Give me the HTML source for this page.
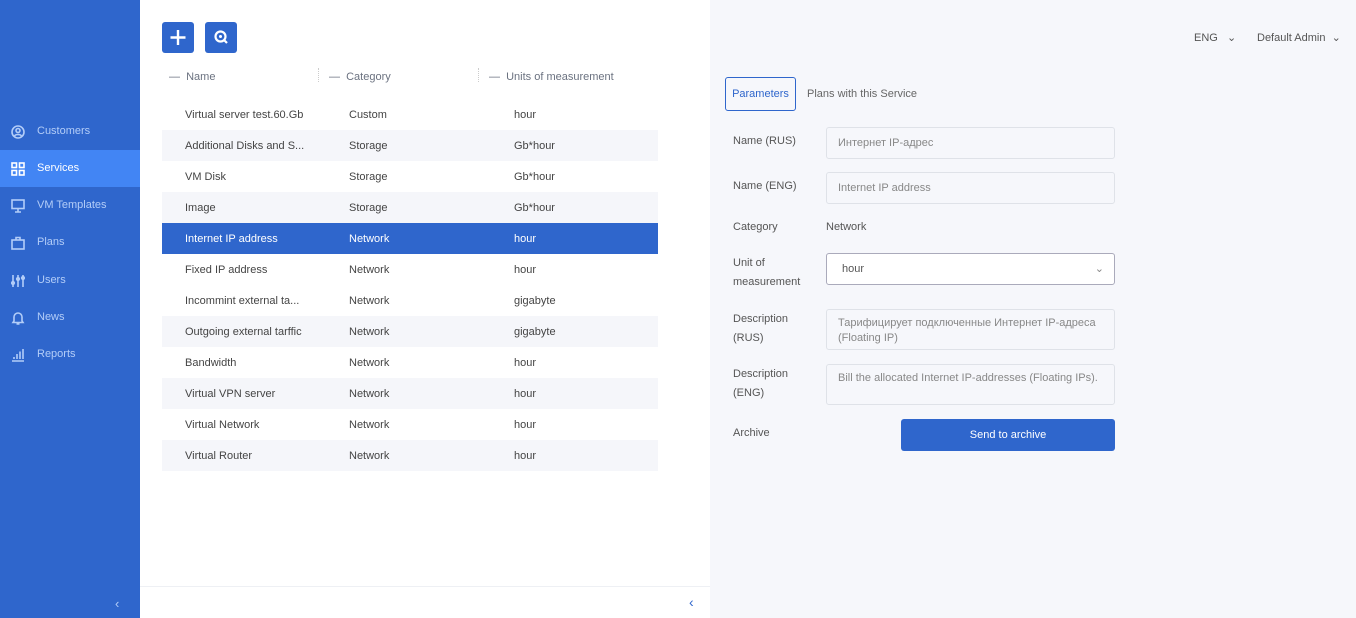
<!DOCTYPE html>
<html><head><meta charset="utf-8"><style>
*{box-sizing:border-box;margin:0;padding:0}
body{width:1356px;height:618px;overflow:hidden;font-family:"Liberation Sans",sans-serif;font-size:11px;color:#444;background:#f6f7fb;position:relative}
.sb{position:absolute;left:0;top:0;width:140px;height:618px;background:#2f66cc}
.nav{position:absolute;left:0;width:140px;height:37px;display:flex;align-items:center;color:#b3cdf8;font-size:11px}
.nav.act{background:#4285f4;color:#fff}
.nav svg{position:absolute;left:11px}
.nav span{position:absolute;left:37px;top:12px}
.mid{position:absolute;left:140px;top:0;width:570px;height:618px;background:#fff}
.btn{position:absolute;top:22px;width:32px;height:31px;background:#2f66cc;border-radius:3px}
.hdr{position:absolute;top:70px;color:#6b7280;font-size:11px}
.row{position:absolute;left:162px;width:496px;height:31px;line-height:33px;color:#444}
.row.alt{background:#f5f6fa}
.row.sel{background:#2f66cc;color:#fff}
.row span{position:absolute}
.lbl{position:absolute;left:733px;color:#555;line-height:19px;margin-top:1px}
.inp{position:absolute;left:826px;width:289px;border:1px solid #dfe2e8;border-radius:3px;background:#f6f7fb;color:#888;padding-left:11px}
</style></head><body>
<div class="sb">
 <div class="nav" style="top:113px"><svg width="14" height="14" viewBox="0 0 14 14" fill="none" stroke="#b3cdf8" stroke-width="1.6"><circle cx="7" cy="7" r="6"/><circle cx="7" cy="5.5" r="2"/><path d="M3.5 11c1-2 6-2 7 0"/></svg><span>Customers</span></div>
 <div class="nav act" style="top:150px"><svg width="14" height="14" viewBox="0 0 14 14" fill="none" stroke="#fff" stroke-width="1.6"><rect x="1" y="1" width="4.5" height="4.5"/><rect x="8.5" y="1" width="4.5" height="4.5"/><rect x="1" y="8.5" width="4.5" height="4.5"/><rect x="8.5" y="8.5" width="4.5" height="4.5"/></svg><span>Services</span></div>
 <div class="nav" style="top:187px"><svg width="14" height="14" viewBox="0 0 14 14" fill="none" stroke="#b3cdf8" stroke-width="1.6"><rect x="1" y="1" width="12" height="8.5"/><path d="M7 9.5v3M4 13h6"/></svg><span>VM Templates</span></div>
 <div class="nav" style="top:224px"><svg width="14" height="14" viewBox="0 0 14 14" fill="none" stroke="#b3cdf8" stroke-width="1.6"><rect x="1" y="4" width="12" height="9"/><path d="M5 4V1.5h4V4"/></svg><span>Plans</span></div>
 <div class="nav" style="top:262px"><svg width="14" height="14" viewBox="0 0 14 14" fill="none" stroke="#b3cdf8" stroke-width="1.6"><path d="M2 1v12M7 1v12M12 1v12"/><circle cx="2" cy="9" r="1.3"/><circle cx="7" cy="5" r="1.3"/><circle cx="12" cy="4" r="1.3"/></svg><span>Users</span></div>
 <div class="nav" style="top:299px"><svg width="14" height="14" viewBox="0 0 14 14" fill="none" stroke="#b3cdf8" stroke-width="1.6"><path d="M3 10V6a4 4 0 0 1 8 0v4l1 1.5H2z M5.5 13h3"/></svg><span>News</span></div>
 <div class="nav" style="top:336px"><svg width="14" height="14" viewBox="0 0 14 14" fill="none" stroke="#b3cdf8" stroke-width="1.6"><path d="M1 13h12M3 11V9M6 11V6M9 11V3.5M12 11V1"/></svg><span>Reports</span></div>
 <div style="position:absolute;left:115px;top:596px;color:#b3cdf8;font-size:13px">‹</div>
</div>
<div class="mid">
 <div style="position:absolute;left:0;top:586px;width:570px;border-top:1px solid #eef0f4"></div>
 <div style="position:absolute;left:549px;top:594px;color:#2f66cc;font-size:14px">‹</div>
</div>
<div class="btn" style="left:162px"><svg width="32" height="31"><path d="M16 8v15M8.5 15.5h15" stroke="#fff" stroke-width="2.4"/></svg></div>
<div class="btn" style="left:205px"><svg width="32" height="31"><circle cx="15.5" cy="14.5" r="5" fill="none" stroke="#fff" stroke-width="2.2"/><circle cx="15.5" cy="14.5" r="1.5" fill="#fff"/><path d="M19 18l3 3" stroke="#fff" stroke-width="2.2"/></svg></div>
<div class="hdr" style="left:169px;top:71px">—&nbsp; Name</div>
<div class="hdr" style="left:329px;top:71px">—&nbsp; Category</div>
<div class="hdr" style="left:489px;top:71px">—&nbsp; Units of measurement</div>
<div style="position:absolute;left:318px;top:68px;height:14px;border-left:1px dotted #ccc"></div>
<div style="position:absolute;left:478px;top:68px;height:14px;border-left:1px dotted #ccc"></div>

<div class="row" style="top:99px"><span style="left:23px">Virtual server test.60.Gb</span><span style="left:187px">Custom</span><span style="left:352px">hour</span></div>
<div class="row alt" style="top:130px"><span style="left:23px">Additional Disks and S...</span><span style="left:187px">Storage</span><span style="left:352px">Gb*hour</span></div>
<div class="row" style="top:161px"><span style="left:23px">VM Disk</span><span style="left:187px">Storage</span><span style="left:352px">Gb*hour</span></div>
<div class="row alt" style="top:192px"><span style="left:23px">Image</span><span style="left:187px">Storage</span><span style="left:352px">Gb*hour</span></div>
<div class="row sel" style="top:223px"><span style="left:23px">Internet IP address</span><span style="left:187px">Network</span><span style="left:352px">hour</span></div>
<div class="row" style="top:254px"><span style="left:23px">Fixed IP address</span><span style="left:187px">Network</span><span style="left:352px">hour</span></div>
<div class="row" style="top:285px"><span style="left:23px">Incommint external ta...</span><span style="left:187px">Network</span><span style="left:352px">gigabyte</span></div>
<div class="row alt" style="top:316px"><span style="left:23px">Outgoing external tarffic</span><span style="left:187px">Network</span><span style="left:352px">gigabyte</span></div>
<div class="row" style="top:347px"><span style="left:23px">Bandwidth</span><span style="left:187px">Network</span><span style="left:352px">hour</span></div>
<div class="row alt" style="top:378px"><span style="left:23px">Virtual VPN server</span><span style="left:187px">Network</span><span style="left:352px">hour</span></div>
<div class="row" style="top:409px"><span style="left:23px">Virtual Network</span><span style="left:187px">Network</span><span style="left:352px">hour</span></div>
<div class="row alt" style="top:440px"><span style="left:23px">Virtual Router</span><span style="left:187px">Network</span><span style="left:352px">hour</span></div>

<div style="position:absolute;left:1194px;top:31px;color:#555">ENG &nbsp;&nbsp;⌄</div>
<div style="position:absolute;left:1257px;top:31px;color:#555">Default Admin &nbsp;⌄</div>

<div style="position:absolute;left:725px;top:77px;width:71px;height:34px;border:1px solid #2f66cc;border-radius:3px;color:#2f66cc;line-height:33px;text-align:center">Parameters</div>
<div style="position:absolute;left:807px;top:88px;color:#666">Plans with this Service</div>

<div class="lbl" style="top:131px">Name (RUS)</div>
<div class="inp" style="top:127px;height:32px;line-height:31px">Интернет IP-адрес</div>
<div class="lbl" style="top:176px">Name (ENG)</div>
<div class="inp" style="top:172px;height:32px;line-height:31px">Internet IP address</div>
<div class="lbl" style="top:217px">Category</div>
<div style="position:absolute;left:826px;top:218px;line-height:19px;color:#555">Network</div>
<div class="lbl" style="top:253px">Unit of<br>measurement</div>
<div class="inp" style="top:253px;height:32px;line-height:31px;background:#fff;border-color:#aab;color:#555;padding-left:15px">hour<span style="position:absolute;right:10px;color:#888">⌄</span></div>
<div class="lbl" style="top:309px">Description<br>(RUS)</div>
<div class="inp" style="top:309px;height:41px;line-height:15px;padding-top:6px">Тарифицирует подключенные Интернет IP-адреса (Floating IP)</div>
<div class="lbl" style="top:364px">Description<br>(ENG)</div>
<div class="inp" style="top:364px;height:41px;line-height:15px;padding-top:6px">Bill the allocated Internet IP-addresses (Floating IPs).</div>
<div class="lbl" style="top:423px">Archive</div>
<div style="position:absolute;left:901px;top:419px;width:214px;height:32px;background:#2f66cc;border-radius:3px;color:#fff;text-align:center;line-height:33px">Send to archive</div>
</body></html>
